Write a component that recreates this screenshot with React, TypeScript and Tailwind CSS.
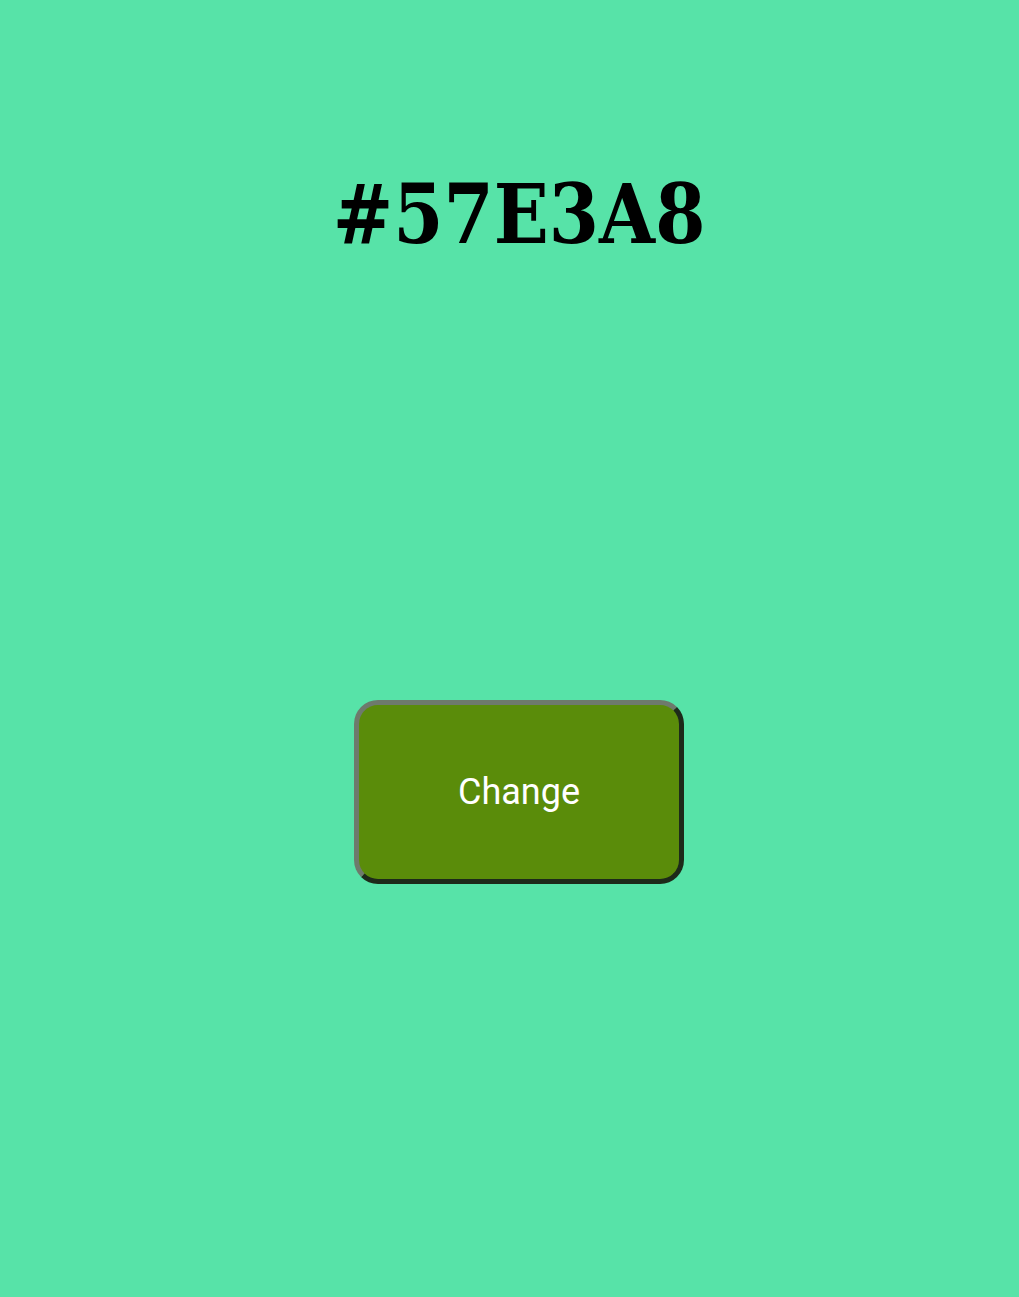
export default function App() {
  return (
    <div className="w-[1019px] h-[1297px] overflow-hidden bg-[#57E3A8] pl-[19px] flex flex-col items-center">
      <h1 className="mt-[162px] h-[104px] flex items-center font-['DejaVu_Serif',serif] text-[83px] font-bold leading-none text-black scale-x-[0.87]">
        #57E3A8
      </h1>
      <button className="mt-[434px] w-[330px] h-[184px] rounded-[24px] bg-[#5a8c0a] border-[5px] border-t-[#6e7a6c] border-l-[#6e7a6c] border-b-[#1d2a1a] border-r-[#1d2a1a] text-white font-['Roboto',sans-serif] text-[36px] flex items-center justify-center">
        Change
      </button>
    </div>
  );
}
